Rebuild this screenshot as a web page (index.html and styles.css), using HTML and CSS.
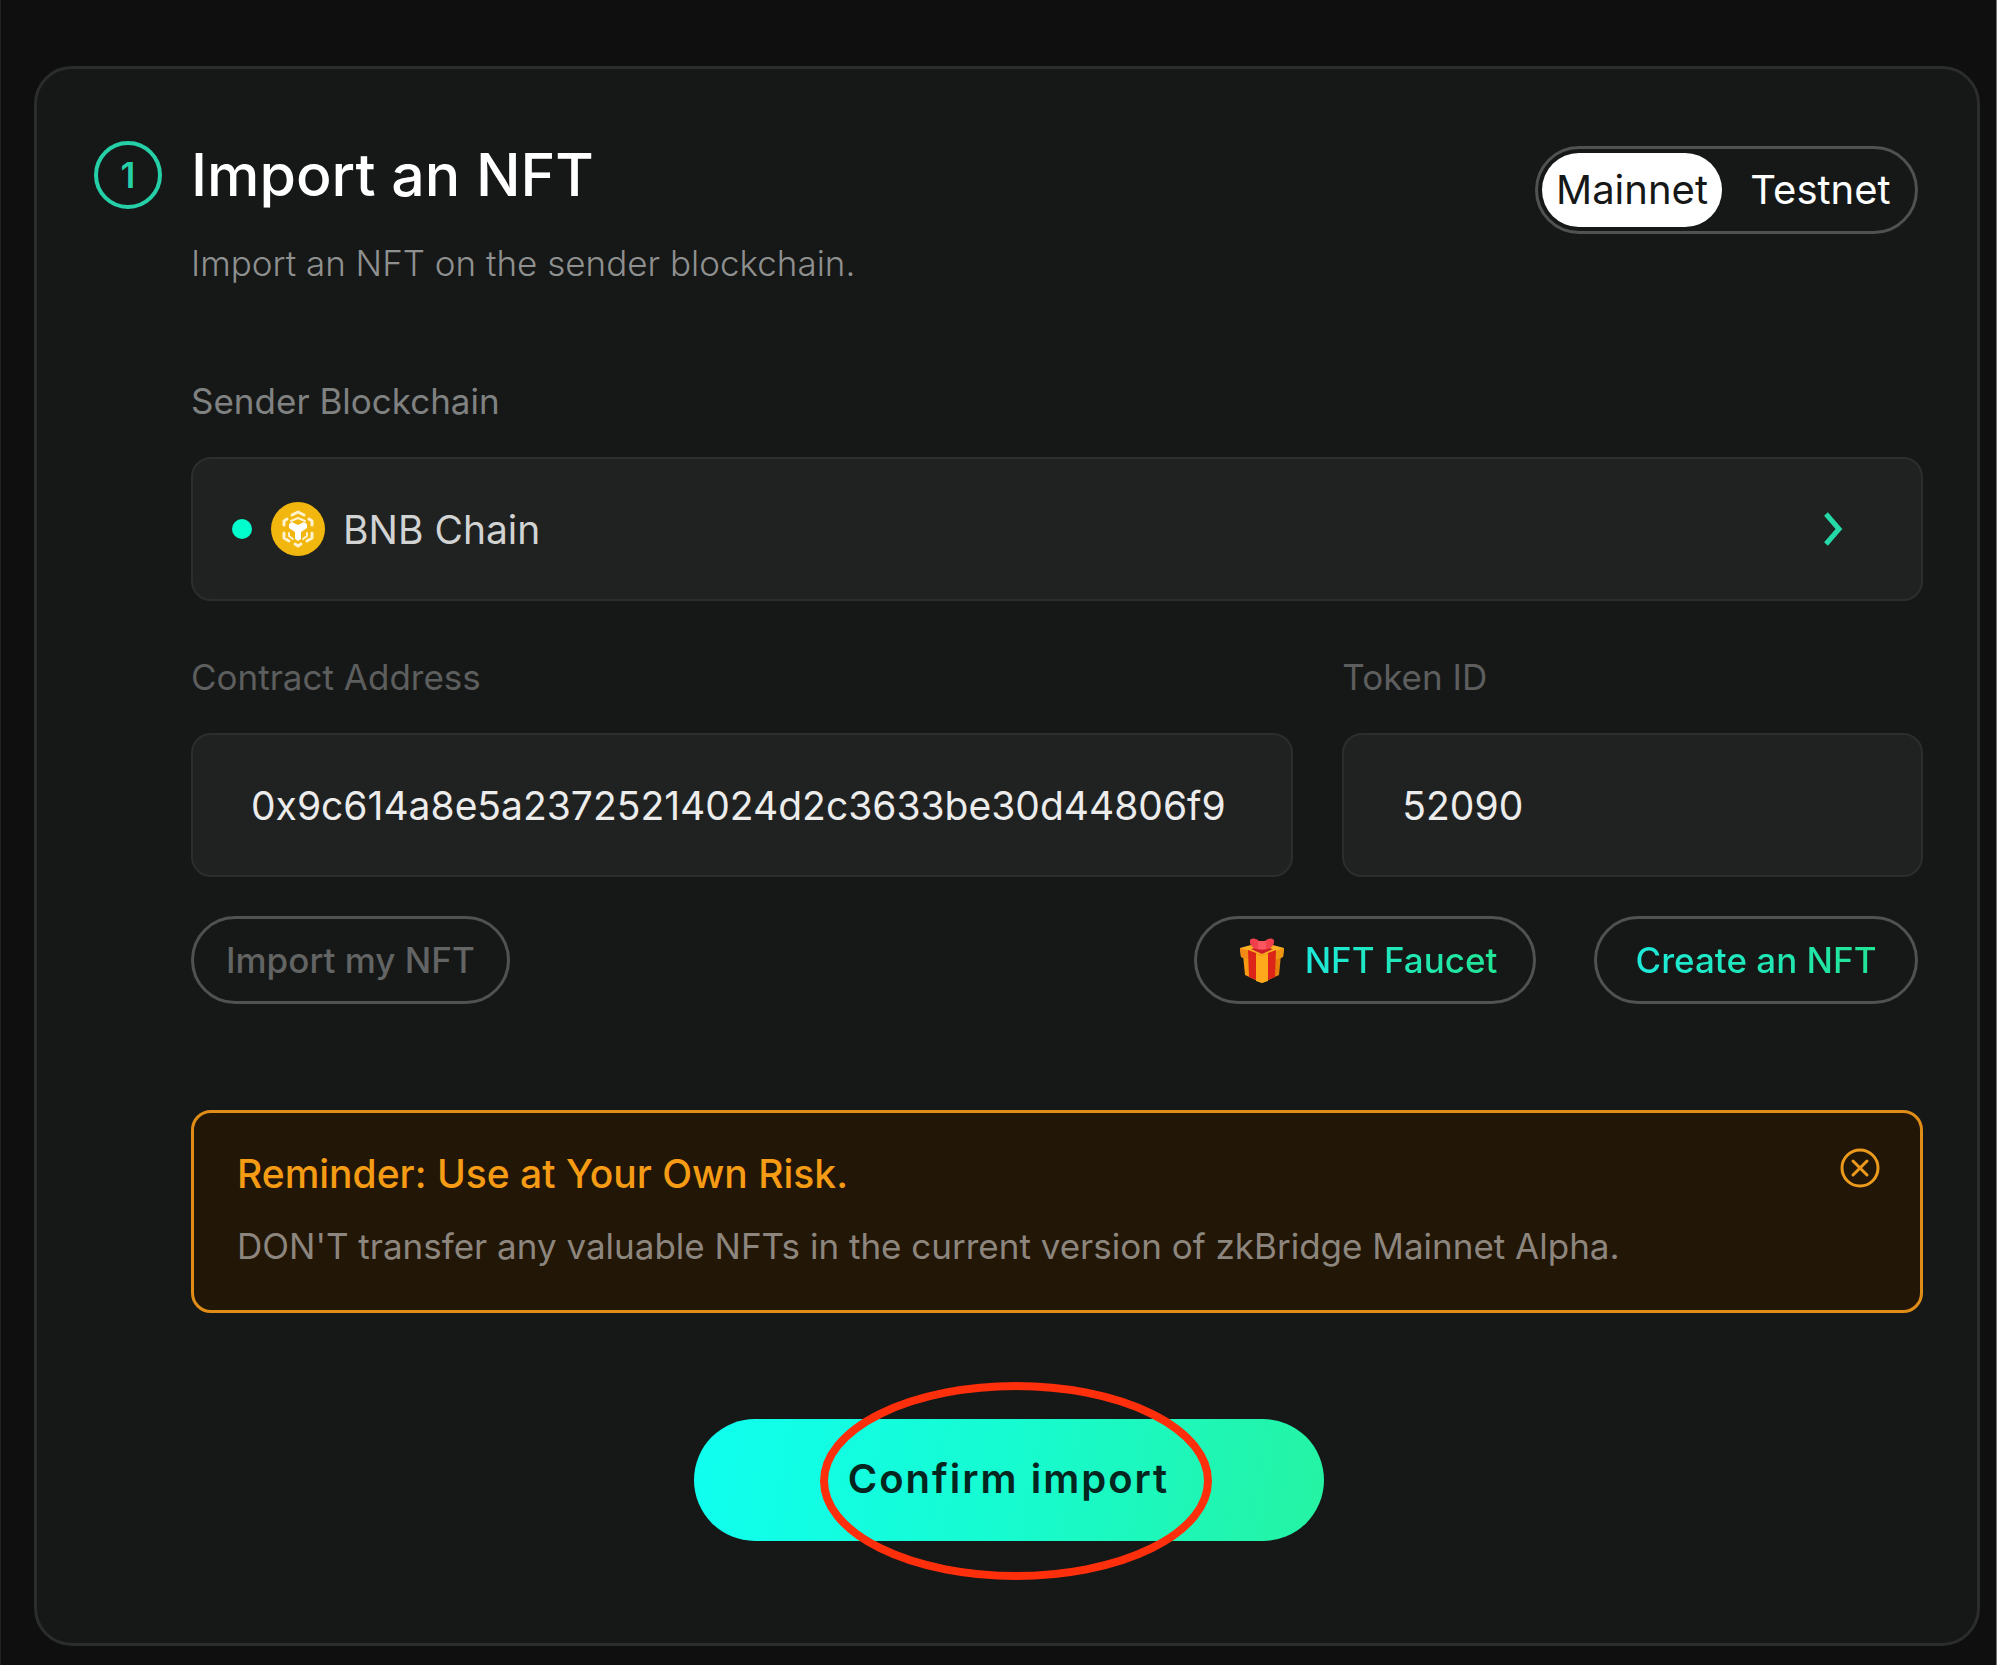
FILE: index.html
```html
<!DOCTYPE html>
<html lang="en">

<head>
    <meta charset="UTF-8">
    <meta name="viewport" content="width=device-width, initial-scale=1.0">
    <title>Import an NFT</title>
    <link rel="stylesheet" href="styles.css">
</head>

<body>
    <main class="card">
        <header class="card-header">
            <div class="step">1</div>
            <div class="heading">
                <h1>Import an NFT</h1>
                <p>Import an NFT on the sender blockchain.</p>
            </div>
            <div class="network" role="radiogroup" aria-label="Network">
                <input type="radio" name="network" id="mainnet" checked>
                <label for="mainnet">Mainnet</label>
                <input type="radio" name="network" id="testnet">
                <label for="testnet">Testnet</label>
            </div>
        </header>

        <form class="form">
            <div class="field">
                <label class="sender-label" for="sender">Sender Blockchain</label>
                <button type="button" class="box chain" id="sender">
                    <span class="dot"></span>
                    <svg class="chain-logo" viewBox="0 0 54 54" aria-hidden="true">
                        <circle cx="27" cy="27" r="27" fill="#f2b70e" />
                        <g fill="none" stroke="#fff3cf" stroke-width="3" stroke-linejoin="round" stroke-linecap="round">
                            <path d="M21 13l6-3 6 3M38 17l3 2v4M41 31v5l-5 3M30 42l-3 2-3-2M18 39l-5-3v-5M13 23v-4l3-2" />
                            <path d="M20 19l7-3 7 3M18 31v3l4 3M36 31v3l-4 3" stroke-width="2" />
                        </g>
                        <path d="M18 22l3-2 6 3 6-3 3 2v4l-6 4v7l-3 2-3-2v-7l-6-4z" fill="#fff" />
                    </svg>
                    <span class="chain-name">BNB Chain</span>
                    <svg class="chevron" viewBox="0 0 20 36" aria-hidden="true">
                        <path d="M3 3l13 15L3 33" fill="none" stroke="#25d9a8" stroke-width="5" />
                    </svg>
                </button>
            </div>

            <div class="row">
                <div class="field address">
                    <label for="contract">Contract Address</label>
                    <input class="box" type="text" id="contract" value="0x9c614a8e5a23725214024d2c3633be30d44806f9">
                </div>
                <div class="field token">
                    <label for="token">Token ID</label>
                    <input class="box" type="text" id="token" value="52090">
                </div>
            </div>

            <div class="actions">
                <button type="button" class="pill muted">Import my NFT</button>
                <button type="button" class="pill faucet">
                    <svg class="gift" viewBox="0 0 46 46" aria-hidden="true">
                        <path d="M4 18l19 7v21L6 38z" fill="#f59a13" />
                        <path d="M42 18l-19 7v21l17-8z" fill="#e57f0c" />
                        <path d="M1 11l22-6 22 6-1 9-21 7-21-7z" fill="#fbb024" />
                        <path d="M1 11l22 7v9L2 20z" fill="#f48a15" />
                        <path d="M45 11l-22 7v9l21-7z" fill="#ee9512" />
                        <path d="M9 13l8 3v27l-7-3zM37 13l-8 3v27l7-3z" fill="#dc2418" />
                        <path d="M17 17l6 2 6-2v27l-6 2-6-2z" fill="#fda91b" />
                        <path d="M12 12l11-3 11 3-11 5z" fill="#c91c25" />
                        <path d="M23 8C19 0 10 0 11 5c0 5 6 8 12 8s12-3 12-8c1-5-8-5-12 3z" fill="#f0404c" />
                        <path d="M19 4h8v8h-8z" fill="#fb5660" />
                    </svg>
                    <span>NFT Faucet</span>
                </button>
                <button type="button" class="pill create"><span>Create an NFT</span></button>
            </div>

            <section class="reminder">
                <h2>Reminder: Use at Your Own Risk.</h2>
                <p>DON'T transfer any valuable NFTs in the current version of zkBridge Mainnet Alpha.</p>
                <button type="button" class="close" aria-label="Close">
                    <svg viewBox="0 0 40 40" aria-hidden="true">
                        <g fill="none" stroke="#eb9a1c" stroke-width="3" stroke-linecap="round">
                            <circle cx="20" cy="20" r="18" />
                            <path d="M13 13l14 14M27 13L13 27" />
                        </g>
                    </svg>
                </button>
            </section>
        </form>

        <div class="confirm-wrap">
            <button type="button" class="confirm">Confirm import</button>
            <svg class="marker" viewBox="0 0 394 200" aria-hidden="true">
                <ellipse cx="197" cy="100" rx="192" ry="95" fill="none" stroke="#ff2f0c" stroke-width="8" />
            </svg>
        </div>
    </main>
</body>

</html>
```
FILE: styles.css
```css
* {
    box-sizing: border-box;
}

body {
    margin: 0;
    min-height: 100vh;
    padding: 66px 16px 18px 33px;
    background-color: #0f0f0f;
    border-left: 1px solid #222;
    border-right: 1px solid #777;
    font-family: "Inter", sans-serif;
    color: #fff;
}

h1,
h2,
p {
    margin: 0;
    font-weight: 400;
}

button,
input {
    font-family: inherit;
    margin: 0;
}

button {
    cursor: pointer;
}

.card {
    padding: 72px 54px 102px 57px;
    background-color: #161817;
    border: 3px solid #2b2d2c;
    border-radius: 38px;
}

.card-header {
    display: flex;
    align-items: flex-start;
}

.step {
    display: flex;
    justify-content: center;
    align-items: center;
    width: 68px;
    height: 68px;
    margin-right: 29px;
    border: 4px solid #25d0a8;
    border-radius: 50%;
    color: #25d0a8;
    font-size: 35px;
    font-weight: 600;
}

.heading {
    flex: 1;
}

.heading h1 {
    font-size: 59px;
    font-weight: 500;
    line-height: 68px;
}

.heading p {
    margin-top: 30px;
    color: #8f9090;
    font-size: 35px;
    font-weight: 300;
    line-height: 48px;
}

.network {
    display: flex;
    margin: 5px 5px 0 0;
    padding: 4px;
    border: 3px solid #505151;
    border-radius: 44px;
}

.network input {
    position: absolute;
    opacity: 0;
}

.network label {
    min-width: 180px;
    border-radius: 38px;
    font-size: 40px;
    line-height: 74px;
    text-align: center;
    cursor: pointer;
}

.network input:checked + label {
    background-color: #fff;
    color: #161817;
}

.network label:last-child {
    min-width: 189px;
    padding-left: 8px;
}

.form {
    margin: 90px 0 0 97px;
}

.field label {
    display: block;
    margin-bottom: 32px;
    color: #5d5e5e;
    font-size: 35px;
    line-height: 48px;
}

.field .sender-label {
    color: #808181;
}

.box {
    width: 100%;
    height: 144px;
    padding: 0 58px;
    background-color: #202221;
    border: 2px solid #2c2d2d;
    border-radius: 20px;
    color: #ececec;
    font-size: 39px;
}

.chain {
    display: flex;
    align-items: center;
    padding: 0 78px 0 39px;
    color: #d2d3d3;
}

.dot {
    width: 20px;
    height: 20px;
    margin-right: 19px;
    border-radius: 50%;
    background-color: #0fc;
}

.chain-logo {
    width: 54px;
    height: 54px;
    margin-right: 18px;
}

.chevron {
    width: 20px;
    height: 36px;
    margin-left: auto;
}

.row {
    display: grid;
    grid-template-columns: 1103fr 581fr;
    gap: 49px;
    margin-top: 52px;
}

.actions {
    display: flex;
    margin: 39px 5px 0 0;
}

.pill {
    display: flex;
    justify-content: center;
    align-items: center;
    height: 88px;
    padding: 0 32px;
    background: none;
    border: 3px solid #505151;
    border-radius: 44px;
    color: #25e0b0;
    font-size: 35px;
    font-weight: 500;
}

.pill span {
    background: linear-gradient(90deg, #1ee9da, #22e595);
    -webkit-background-clip: text;
    background-clip: text;
    color: transparent;
}

.muted {
    min-width: 317px;
    color: #636464;
}

.faucet {
    min-width: 342px;
    padding: 0 32px 0 38px;
    margin-left: auto;
}

.create {
    min-width: 324px;
    margin-left: 58px;
}

.gift {
    width: 46px;
    height: 46px;
    margin-right: 20px;
}

.reminder {
    position: relative;
    margin-top: 106px;
    padding: 37px 43px 40px;
    background-color: #221607;
    border: 3px solid #e08d18;
    border-radius: 20px;
}

.reminder h2 {
    color: #f59c14;
    font-size: 39px;
    font-weight: 500;
    line-height: 48px;
}

.reminder p {
    margin-top: 24px;
    color: #8d867e;
    font-size: 35px;
    line-height: 48px;
}

.close {
    position: absolute;
    top: 35px;
    right: 40px;
    width: 40px;
    height: 40px;
    padding: 0;
    background: none;
    border: none;
}

.close svg {
    display: block;
}

.confirm-wrap {
    position: relative;
    width: 630px;
    margin: 106px auto 0;
}

.confirm {
    display: block;
    width: 100%;
    height: 122px;
    padding: 0 0 4px;
    background: linear-gradient(100deg, #0ffff0, #16fbd0 50%, #25f3a2);
    border: none;
    border-radius: 61px;
    color: #05261f;
    font-size: 40px;
    font-weight: 600;
    letter-spacing: 2px;
}

/* red ring around the confirm label */
.marker {
    position: absolute;
    top: -38px;
    left: 125px;
    width: 394px;
    height: 200px;
    pointer-events: none;
}
```
